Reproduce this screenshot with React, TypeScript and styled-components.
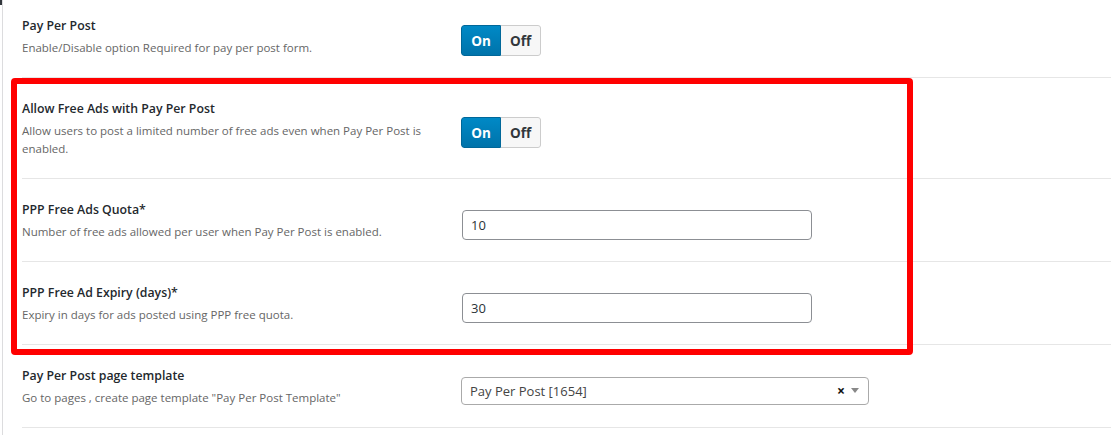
import React from 'react'
import styled, { createGlobalStyle } from 'styled-components'

const GlobalStyle = createGlobalStyle`
  html, body {
    margin: 0;
    padding: 0;
    background: #ffffff;
  }
  body {
    font-family: "Open Sans", "Noto Sans", sans-serif;
    color: #23282d;
  }
`

const Page = styled.div`
  position: relative;
  width: 1111px;
  height: 435px;
  overflow: hidden;
  background: #fff;
`

const Frame = styled.div`
  margin-left: 2px;
  padding-left: 19px;
  border-left: 1px solid #dcdcde;
  height: 100%;
  position: relative;
  &::before {
    content: '';
    position: absolute;
    left: -3px;
    top: 0;
    width: 2px;
    height: 5px;
    background: #32373c;
  }
`

const Row = styled.div<{ $top?: number }>`
  display: grid;
  grid-template-columns: 439px 1fr;
  align-items: center;
  padding: ${(p) => p.$top ?? 21}px 0 20px;
  border-bottom: 1px solid #e6e6e6;
`

const Label = styled.div`
  padding-right: 12px;
`

const Title = styled.div`
  font-size: 12.3px;
  font-weight: 600;
  line-height: 20px;
  color: #23282d;
`

const Desc = styled.div`
  margin-top: 3px;
  font-size: 11.5px;
  line-height: 18px;
  color: #666666;
`

const Control = styled.div`
  margin-top: 8px;
  display: flex;
`

const ToggleGroup = styled.div`
  display: flex;
  height: 31px;
  border-radius: 3px;
  overflow: hidden;
`

const ToggleSide = styled.div<{ $active?: boolean }>`
  width: 40px;
  box-sizing: border-box;
  display: flex;
  align-items: center;
  justify-content: center;
  font-size: 13.5px;
  font-weight: 700;
  color: ${(p) => (p.$active ? '#ffffff' : '#32373c')};
  background: ${(p) => (p.$active ? 'linear-gradient(#0089c6, #0073aa)' : '#f7f7f7')};
  border: 1px solid ${(p) => (p.$active ? '#006799' : '#cccccc')};
  border-radius: ${(p) => (p.$active ? '3px 0 0 3px' : '0 3px 3px 0')};
  ${(p) => (p.$active ? '' : 'border-left: none;')}
`

const TextInput = styled.input`
  width: 350px;
  height: 30px;
  box-sizing: border-box;
  margin-left: 1px;
  padding: 0 8px;
  border: 1px solid #8c8f94;
  border-radius: 4px;
  font-family: "Open Sans", "Noto Sans", sans-serif;
  font-size: 13px;
  color: #2c3338;
  background: #fff;
  outline: none;
`

const SelectBox = styled.div`
  width: 408px;
  height: 28px;
  box-sizing: border-box;
  border: 1px solid #aaaaaa;
  border-radius: 4px;
  display: flex;
  align-items: center;
  padding: 0 8px;
  font-size: 13px;
  color: #444444;
`

const SelectValue = styled.span`
  flex: 1;
`

const Clear = styled.span`
  font-size: 14px;
  font-weight: 700;
  color: #111;
  margin-right: 6px;
  line-height: 1;
`

const Arrow = styled.span`
  width: 0;
  height: 0;
  border-left: 4px solid transparent;
  border-right: 4px solid transparent;
  border-top: 5px solid #888;
  margin-right: 1px;
`

const Highlight = styled.div`
  position: absolute;
  left: 11px;
  top: 78px;
  width: 902px;
  height: 277px;
  box-sizing: border-box;
  border: 6px solid #ff0000;
  border-radius: 4px;
  pointer-events: none;
`

const Toggle: React.FC<{ on: boolean }> = ({ on }) => (
  <ToggleGroup>
    <ToggleSide $active={on}>On</ToggleSide>
    <ToggleSide $active={!on}>Off</ToggleSide>
  </ToggleGroup>
)

export default function App() {
  return (
    <Page>
      <GlobalStyle />
      <Frame>
        <Row $top={16}>
          <Label>
            <Title>Pay Per Post</Title>
            <Desc>Enable/Disable option Required for pay per post form.</Desc>
          </Label>
          <Control>
            <Toggle on />
          </Control>
        </Row>
        <Row>
          <Label>
            <Title>Allow Free Ads with Pay Per Post</Title>
            <Desc>
              Allow users to post a limited number of free ads even when Pay Per Post is enabled.
            </Desc>
          </Label>
          <Control>
            <Toggle on />
          </Control>
        </Row>
        <Row>
          <Label>
            <Title>PPP Free Ads Quota*</Title>
            <Desc>Number of free ads allowed per user when Pay Per Post is enabled.</Desc>
          </Label>
          <Control>
            <TextInput type="text" defaultValue="10" />
          </Control>
        </Row>
        <Row>
          <Label>
            <Title>PPP Free Ad Expiry (days)*</Title>
            <Desc>Expiry in days for ads posted using PPP free quota.</Desc>
          </Label>
          <Control>
            <TextInput type="text" defaultValue="30" />
          </Control>
        </Row>
        <Row>
          <Label>
            <Title>Pay Per Post page template</Title>
            <Desc>Go to pages , create page template "Pay Per Post Template"</Desc>
          </Label>
          <Control>
            <SelectBox>
              <SelectValue>Pay Per Post [1654]</SelectValue>
              <Clear>×</Clear>
              <Arrow />
            </SelectBox>
          </Control>
        </Row>
      </Frame>
      <Highlight />
    </Page>
  )
}
